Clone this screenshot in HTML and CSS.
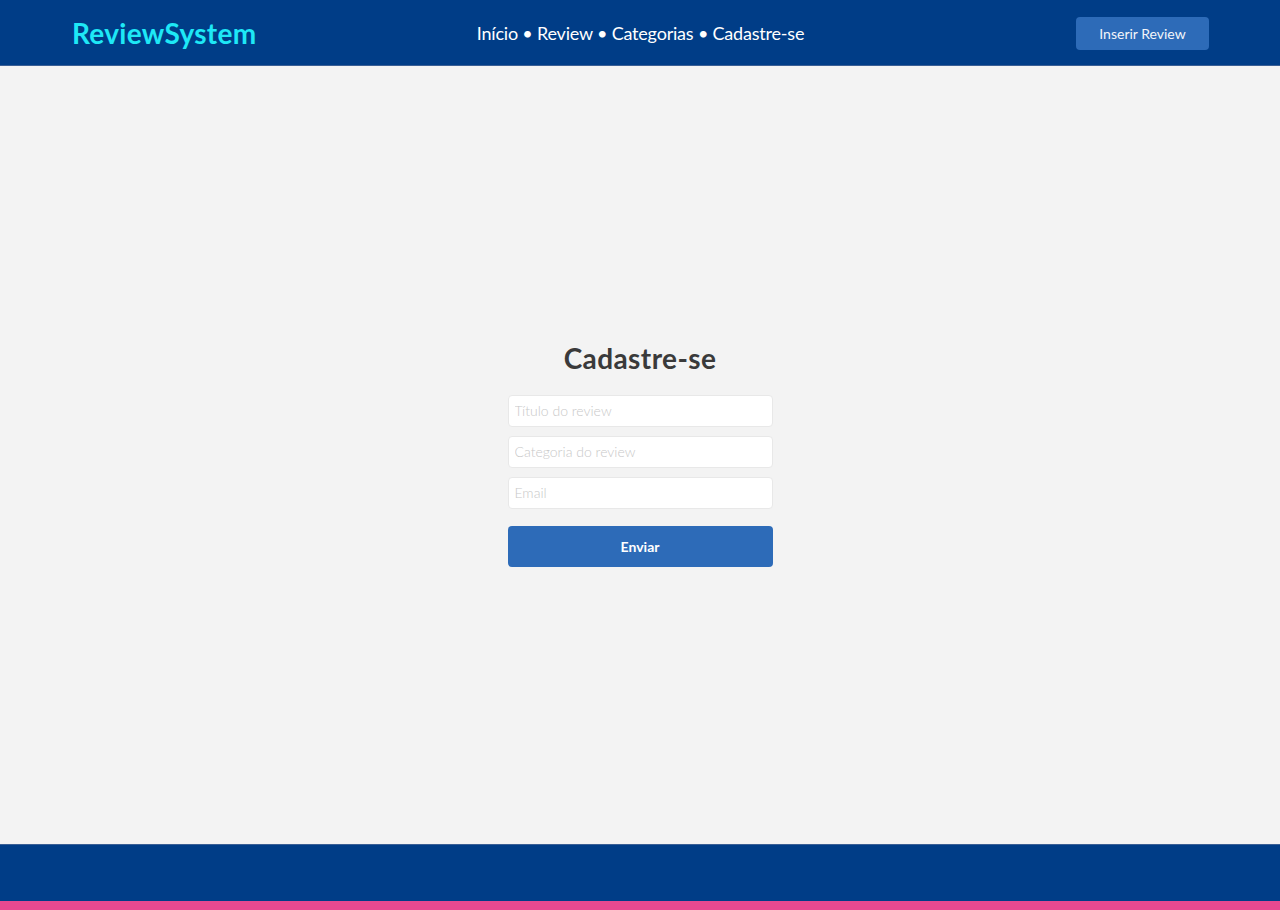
FILE: index.html
```html
<!DOCTYPE html>
<html lang="pt-BR">
<head>
<meta charset="utf-8">
<title>ReviewSystem</title>
<link rel="stylesheet" href="styles.css">
</head>
<body>
<header class="topbar">
  <a class="logo" href="#">ReviewSystem</a>
  <nav class="nav">
    <a href="#">Início</a> • <a href="#">Review</a> • <a href="#">Categorias</a> • <a href="#">Cadastre-se</a>
  </nav>
  <div class="actions">
    <a class="btn-top" href="#">Inserir Review</a>
  </div>
</header>
<main class="main">
  <form class="form">
    <h1 class="title">Cadastre-se</h1>
    <input class="field" type="text" placeholder="Título do review">
    <input class="field" type="text" placeholder="Categoria do review">
    <input class="field" type="email" placeholder="Email">
    <button class="submit" type="button">Enviar</button>
  </form>
</main>
<footer class="footer"></footer>
</body>
</html>
```

FILE: styles.css
```css
* { box-sizing: border-box; }
html, body { height: 100%; }
body {
  margin: 0;
  font-family: "Lato", "Open Sans", sans-serif;
  background: #f3f3f3;
  display: flex;
  flex-direction: column;
}
.topbar {
  height: 66px;
  background: #003d87;
  border-bottom: 1px solid #3a5f95;
  display: grid;
  grid-template-columns: 1fr auto 1fr;
  align-items: center;
  padding: 0 71px 0 72px;
  flex: 0 0 auto;
}
.logo {
  justify-self: start;
  color: #1ee8f6;
  font-weight: 700;
  font-size: 28px;
  text-decoration: none;
  letter-spacing: 0.3px;
}
.nav {
  color: #ffffff;
  font-size: 18px;
  letter-spacing: -0.2px;
}
.nav a { color: #ffffff; text-decoration: none; }
.actions {
  justify-self: end;
  display: flex;
  padding-top: 1px;
}
.btn-top {
  display: inline-flex;
  align-items: center;
  justify-content: center;
  width: 133px;
  height: 33px;
  background: #2d6bb8;
  color: #f2f5fa;
  border-radius: 4px;
  font-size: 14px;
  text-decoration: none;
}
.main {
  flex: 1 1 auto;
  display: flex;
  align-items: center;
  justify-content: center;
}
.form {
  width: 265px;
  display: flex;
  flex-direction: column;
  gap: 9px;
  margin-top: -3px;
}
.title {
  margin: 0 0 11px;
  text-align: center;
  font-size: 28px;
  font-weight: 700;
  color: #3a3a3a;
  letter-spacing: 0.4px;
}
.field {
  height: 32px;
  border: 1px solid #e8e8e8;
  border-radius: 4px;
  background: #fff;
  padding: 0 6px;
  font-family: inherit;
  font-size: 14px;
  color: #333;
}
.field::placeholder { color: #c8c8c8; font-weight: 300; }
.submit {
  margin-top: 8px;
  height: 41px;
  border: none;
  border-radius: 4px;
  background: #2d6bb8;
  color: #fff;
  font-family: inherit;
  font-weight: 700;
  font-size: 14px;
}
.footer {
  flex: 0 0 auto;
  height: 66px;
  background: #003d87;
  border-top: 1px solid #3a5f95;
  border-bottom: 9px solid #e84990;
}
```
